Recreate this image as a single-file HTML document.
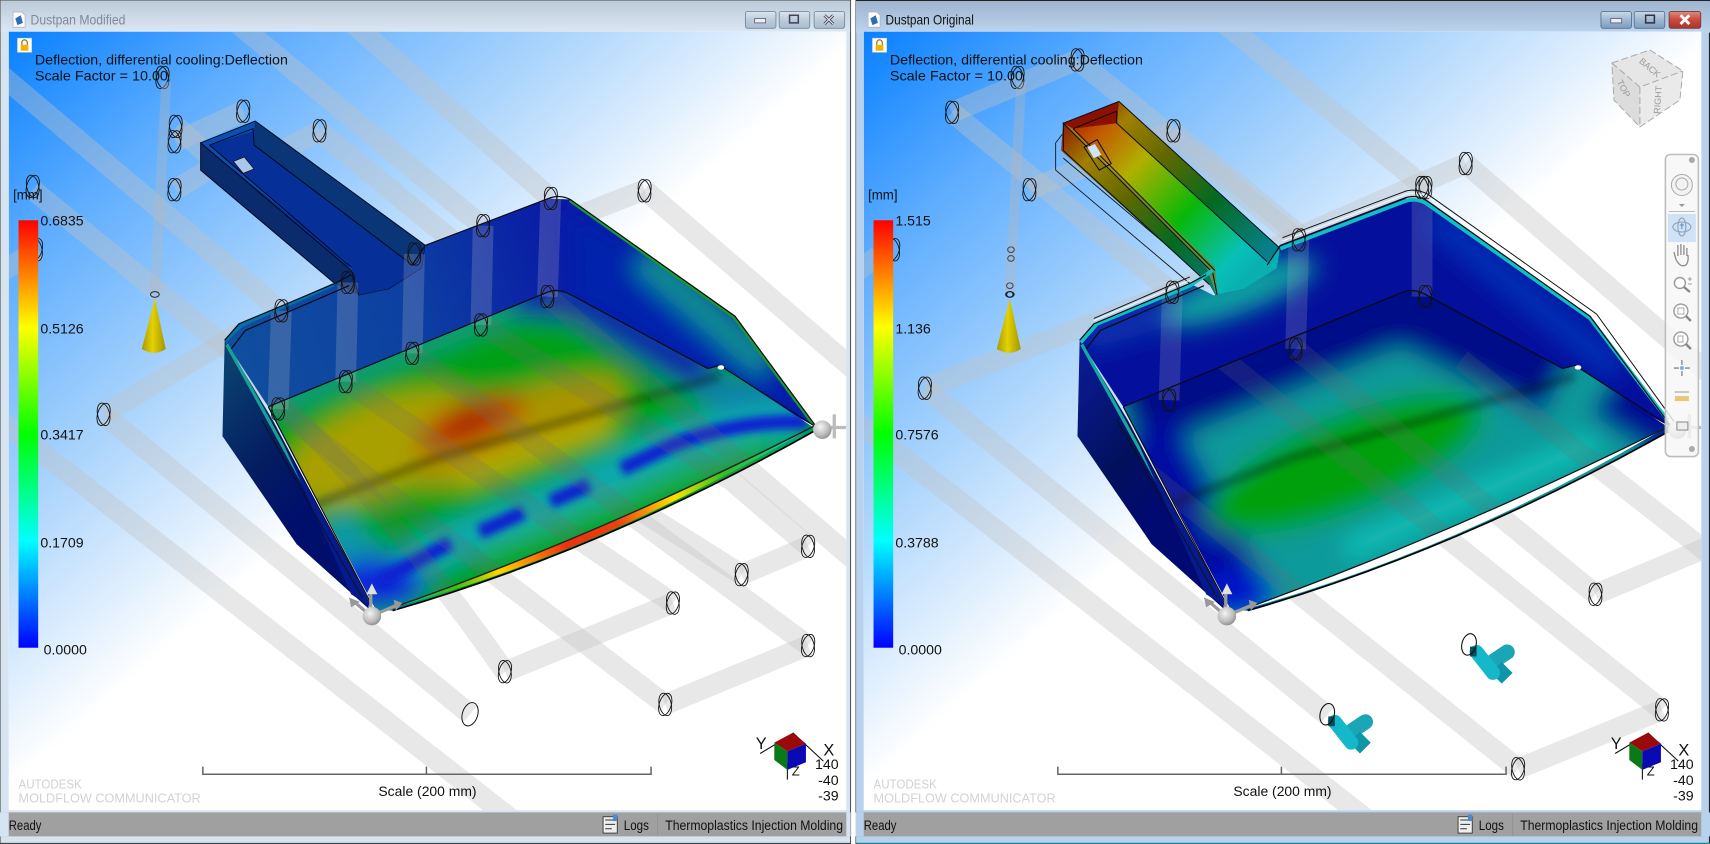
<!DOCTYPE html>
<html><head><meta charset="utf-8"><title>Dustpan</title>
<style>html,body{margin:0;padding:0;background:#fff}svg{display:block}text{font-family:"Liberation Sans",sans-serif;fill:#111}</style>
</head><body>
<svg xmlns="http://www.w3.org/2000/svg" width="1710" height="844" viewBox="0 0 1568 774" preserveAspectRatio="none">
<defs>
<linearGradient id="bgL" gradientUnits="userSpaceOnUse" x1="8" y1="29" x2="352" y2="420"><stop offset="0" stop-color="#0880ff"/><stop offset=".3" stop-color="#5cacff"/><stop offset=".65" stop-color="#acd5fc"/><stop offset=".88" stop-color="#e2f0fe"/><stop offset="1" stop-color="#fff"/></linearGradient>
<linearGradient id="bgR" gradientUnits="userSpaceOnUse" x1="792" y1="29" x2="1136" y2="420"><stop offset="0" stop-color="#0880ff"/><stop offset=".3" stop-color="#5cacff"/><stop offset=".65" stop-color="#acd5fc"/><stop offset=".88" stop-color="#e2f0fe"/><stop offset="1" stop-color="#fff"/></linearGradient>
<linearGradient id="tL" x1="0" y1="0" x2="0" y2="1"><stop offset="0" stop-color="#bccad8"/><stop offset="1" stop-color="#dbe7f3"/></linearGradient>
<linearGradient id="tR" x1="0" y1="0" x2="0" y2="1"><stop offset="0" stop-color="#9fb5cf"/><stop offset="1" stop-color="#bcd4ee"/></linearGradient>
<linearGradient id="btn" x1="0" y1="0" x2="0" y2="1"><stop offset="0" stop-color="#dbe5ef"/><stop offset=".5" stop-color="#bccbdb"/><stop offset="1" stop-color="#a9bccf"/></linearGradient>
<linearGradient id="btnR" x1="0" y1="0" x2="0" y2="1"><stop offset="0" stop-color="#c9d9e9"/><stop offset=".5" stop-color="#9fb7d2"/><stop offset="1" stop-color="#7e9cbd"/></linearGradient>
<linearGradient id="cls" x1="0" y1="0" x2="0" y2="1"><stop offset="0" stop-color="#dc8d7f"/><stop offset=".5" stop-color="#c9493c"/><stop offset="1" stop-color="#a7362c"/></linearGradient>
<linearGradient id="scale" x1="0" y1="0" x2="0" y2="1"><stop offset="0" stop-color="#f00"/><stop offset=".25" stop-color="#ff0"/><stop offset=".5" stop-color="#0f0"/><stop offset=".75" stop-color="#0ff"/><stop offset="1" stop-color="#00f"/></linearGradient>
<linearGradient id="cone" x1="0" y1="0" x2="1" y2="0"><stop offset="0" stop-color="#a89a00"/><stop offset=".45" stop-color="#e4d200"/><stop offset="1" stop-color="#a39500"/></linearGradient>
<linearGradient id="wallL" gradientUnits="userSpaceOnUse" x1="206" y1="300" x2="510" y2="210"><stop offset="0" stop-color="#104e9e"/><stop offset=".55" stop-color="#0c3fa2"/><stop offset="1" stop-color="#0a1aa6"/></linearGradient>
<linearGradient id="outer" gradientUnits="userSpaceOnUse" x1="205" y1="340" x2="310" y2="430"><stop offset="0" stop-color="#0a4070"/><stop offset=".6" stop-color="#041c60"/><stop offset="1" stop-color="#000f6c"/></linearGradient>
<linearGradient id="outerR" gradientUnits="userSpaceOnUse" x1="205" y1="340" x2="310" y2="430"><stop offset="0" stop-color="#0a1a90"/><stop offset=".6" stop-color="#02105c"/><stop offset="1" stop-color="#000a70"/></linearGradient>
<linearGradient id="edge" gradientUnits="userSpaceOnUse" x1="362" y1="556" x2="745" y2="392"><stop offset="0" stop-color="#10b090"/><stop offset=".14" stop-color="#40c010"/><stop offset=".24" stop-color="#ffd400"/><stop offset=".4" stop-color="#f03010"/><stop offset=".52" stop-color="#e84010"/><stop offset=".66" stop-color="#ffe000"/><stop offset=".78" stop-color="#30c020"/><stop offset="1" stop-color="#10c8d0"/></linearGradient>
<linearGradient id="hR" gradientUnits="userSpaceOnUse" x1="190" y1="105" x2="355" y2="260"><stop offset="0" stop-color="#a81000"/><stop offset=".16" stop-color="#c25a00"/><stop offset=".36" stop-color="#b0b000"/><stop offset=".64" stop-color="#08b808"/><stop offset=".9" stop-color="#08c0b8"/><stop offset="1" stop-color="#08b0b0"/></linearGradient>
<linearGradient id="hRd" gradientUnits="userSpaceOnUse" x1="190" y1="105" x2="355" y2="260"><stop offset="0" stop-color="#880c00"/><stop offset=".2" stop-color="#a08000"/><stop offset=".42" stop-color="#606800"/><stop offset=".68" stop-color="#046a20"/><stop offset="1" stop-color="#088090"/></linearGradient>
<radialGradient id="ball" cx=".4" cy=".35" r=".75"><stop offset="0" stop-color="#f4f4f4"/><stop offset=".6" stop-color="#bcbcbc"/><stop offset="1" stop-color="#808080"/></radialGradient>
<filter id="b14" x="-30%" y="-30%" width="160%" height="160%"><feGaussianBlur stdDeviation="11"/></filter>
<filter id="b4" x="-30%" y="-30%" width="160%" height="160%"><feGaussianBlur stdDeviation="3.5"/></filter>
<clipPath id="cL"><rect x="8" y="29" width="768" height="714"/></clipPath>
<clipPath id="cR"><rect x="792" y="29" width="768" height="714"/></clipPath>
<clipPath id="floor"><path d="M246,373 L502,268 Q512,264 523,270 L649,338 L660,335 L749,394 Q554,504 360,560 L345,560 Z"/></clipPath>
<clipPath id="back"><path d="M206,312 L219,297 L307,260 L329,271 L357,265 L387,246 L390,225 L503,182 L523,183 L674,290 L749,392 L649,338 L523,270 L502,268 L246,373 Z"/></clipPath>
<g id="ring" fill="none" stroke="#111" stroke-width=".8"><ellipse rx="5.5" ry="10.5" transform="rotate(17)"/><ellipse rx="5.5" ry="10.5" transform="rotate(-13)"/></g>
<g id="knot" fill="none" stroke-linecap="round"><path d="M8,0 L20,-8" stroke="#1aa6b6" stroke-width="14"/><path d="M10,6 L20,16" stroke="#0e96a8" stroke-width="14" stroke-linecap="butt"/><path d="M-8,-8 L7,11" stroke="#14b8c8" stroke-width="13"/><rect x="-14" y="-13" width="6" height="9" fill="#0a4a58"/><ellipse cx="-15" cy="-15" rx="6.5" ry="10" stroke="#111" stroke-width="1" transform="rotate(14 -15 -15)"/></g>
<g id="legendaxes">
<path d="M697,691 L722,676 M727,672 L755,698 M722,700 L722,715" stroke="#111" stroke-width="1" fill="none"/>
<path d="M710,681 L727,672 L739,682 L722,689Z" fill="#9a0a0a"/><path d="M710,681 L722,689 L722,706 L710,697Z" fill="#0a7a18"/><path d="M722,689 L739,682 L739,699 L722,706Z" fill="#0a0ab4"/>
<text x="693" y="687" font-size="15">Y</text><text x="755" y="693" font-size="15">X</text><text x="726" y="711" font-size="12">Z</text>
<text x="769" y="705" font-size="13" text-anchor="end">140</text><text x="769" y="720" font-size="13" text-anchor="end">-40</text><text x="769" y="734" font-size="13" text-anchor="end">-39</text>
</g>
<g id="common">
<rect x="17" y="202" width="18" height="392" fill="url(#scale)"/>
<path d="M186,703 V710 H597 V703 M391,703 V710" fill="none" stroke="#666" stroke-width="1.4"/>
<text x="347" y="730" font-size="13" textLength="90" lengthAdjust="spacingAndGlyphs">Scale (200 mm)</text>
<text x="17" y="723" font-size="12" style="fill:#d2d2d2" textLength="58" lengthAdjust="spacingAndGlyphs">AUTODESK</text>
<text x="17" y="736" font-size="12" style="fill:#d2d2d2" textLength="167" lengthAdjust="spacingAndGlyphs">MOLDFLOW COMMUNICATOR</text>
<rect x="16" y="35" width="13" height="13" fill="#fff" stroke="#ccc" stroke-width=".5"/><rect x="19" y="41" width="7" height="5.5" fill="#f0b400"/><path d="M20,41 V39 a2.5,2.5 0 0 1 5,0 V41" fill="none" stroke="#8a6a00" stroke-width="1"/>
<text x="32" y="59" font-size="13" textLength="232" lengthAdjust="spacingAndGlyphs">Deflection, differential cooling:Deflection</text>
<text x="32" y="74" font-size="13" textLength="122" lengthAdjust="spacingAndGlyphs">Scale Factor = 10.00</text>
<text x="12" y="183" font-size="13" textLength="27" lengthAdjust="spacingAndGlyphs">[mm]</text>
<path d="M148,75 L137,268 L147,268 L157,75 Z" fill="#b8b8b8" fill-opacity=".35"/>
<path d="M142,274 L152,320 Q142,327 130,320 Z" fill="url(#cone)"/>
<ellipse cx="142" cy="270" rx="4" ry="2.6" fill="none" stroke="#222" stroke-width=".9"/>
</g>
<g id="status">
<rect x="0" y="745" width="780" height="22" fill="#a0a0a0"/>
<text x="8" y="761" font-size="13" textLength="30" lengthAdjust="spacingAndGlyphs">Ready</text>
<rect x="553" y="749" width="13" height="15" fill="#eee" stroke="#333" stroke-width=".8"/><path d="M555,752 H564 M555,756 H564 M555,760 H561" stroke="#333" stroke-width="1"/><rect x="562" y="747" width="4" height="6" fill="#4a8ad0"/>
<text x="572" y="761" font-size="13" textLength="23" lengthAdjust="spacingAndGlyphs">Logs</text>
<path d="M603,746 V766" stroke="#949494"/>
<text x="610" y="761" font-size="13" textLength="163" lengthAdjust="spacingAndGlyphs">Thermoplastics Injection Molding</text>
</g>
<g id="pan-lines" fill="none" stroke="#0a0a14" stroke-width="1.1">
<path d="M206,312 L219,297 L307,260 L322,252 M378,243 L390,225 L503,182 Q513,178 523,183 L674,290 L749,392"/>
<path d="M246,373 L502,268 Q512,264 523,270 L649,338 L660,335 L749,392"/>
<path d="M246,373 L340,553"/>
<path d="M212,320 L225,303 L320,262"/>
</g>
</defs>

<!-- frames -->
<rect width="1568" height="774" fill="#fff"/>
<rect x="0" y="0" width="780" height="774" fill="#d6e3f0" stroke="#444" stroke-width="1"/>
<rect x=".5" y=".5" width="779" height="29" fill="url(#tL)"/>
<rect x="784.5" y=".5" width="783" height="773" fill="#b8d1ec" stroke="#222"/>
<rect x="785" y="1" width="783" height="29" fill="url(#tR)"/>

<!-- title left -->
<path d="M12,11 H20 L23,14 V25 H12Z" fill="#fff" stroke="#aab" stroke-width=".6"/><path d="M14,17 L19,14 L21,21 L16,23Z" fill="#2c6fb8"/>
<text x="28" y="22.5" font-size="12.5" style="fill:#7d8b99" textLength="87" lengthAdjust="spacingAndGlyphs">Dustpan Modified</text>
<g stroke="#76889a" stroke-width=".8"><rect x="683.5" y="10.5" width="28" height="15.5" rx="2" fill="url(#btn)"/><rect x="714.5" y="10.5" width="28" height="15.5" rx="2" fill="url(#btn)"/><rect x="746.5" y="10.5" width="28" height="15.5" rx="2" fill="url(#btn)"/></g>
<rect x="692" y="17" width="10" height="4" fill="#e8eef4" stroke="#556" stroke-width=".7"/><rect x="724" y="14" width="8" height="7" fill="none" stroke="#445" stroke-width="1.4"/>
<path d="M756,14 L764,22 M764,14 L756,22" stroke="#445" stroke-width="2.6"/><path d="M756,14 L764,22 M764,14 L756,22" stroke="#eef" stroke-width="1"/>

<!-- title right -->
<path d="M796,11 H804 L807,14 V25 H796Z" fill="#fff" stroke="#aab" stroke-width=".6"/><path d="M798,17 L803,14 L805,21 L800,23Z" fill="#2c6fb8"/>
<text x="812" y="22.5" font-size="12.5" textLength="81" lengthAdjust="spacingAndGlyphs">Dustpan Original</text>
<g stroke="#54708f" stroke-width=".8"><rect x="1468" y="10.5" width="28" height="15.5" rx="2" fill="url(#btnR)"/><rect x="1498.5" y="10.5" width="28" height="15.5" rx="2" fill="url(#btnR)"/></g>
<rect x="1530.5" y="10.5" width="29" height="15.5" rx="2" fill="url(#cls)" stroke="#7a3a34" stroke-width=".8"/>
<rect x="1477" y="17" width="10" height="4" fill="#e8eef4" stroke="#556" stroke-width=".7"/><rect x="1509" y="14" width="8" height="7" fill="none" stroke="#334" stroke-width="1.4"/>
<path d="M1541,14 L1549,22 M1549,14 L1541,22" stroke="#fff" stroke-width="2.6"/>

<!-- LEFT CLIENT -->
<rect x="8" y="29" width="768" height="714" fill="#fff"/>
<g clip-path="url(#cL)">
<rect x="8" y="29" width="768" height="714" fill="url(#bgL)"/>
<g fill="none" stroke="#c2c2c2" stroke-opacity=".38" stroke-width="19">
<path d="M95,380 L431,655"/><path d="M0,385 L470,752"/>
<path d="M0,68 L256,284"/><path d="M30,174 L211,321"/><path d="M162,116 L319,259"/>
<path d="M216,20 L443,208"/><path d="M322,20 L505,182"/><path d="M293,120 L420,225"/>
<path d="M591,174 L790,345"/><path d="M505,208 L591,174"/>
<path d="M95,380 L220,305"/><path d="M161,174 L200,150"/><path d="M161,130 L223,102"/><path d="M235,150 L293,120"/><path d="M0,250 L35,229"/>
<path d="M215,330 Q340,440 463,616"/><path d="M255,375 L610,646"/><path d="M317,350 L617,553"/><path d="M378,324 L741,592"/><path d="M400,350 L680,527"/><path d="M441,298 L670,440 L741,501"/><path d="M502,272 L785,515"/>
<path d="M463,616 L617,553"/><path d="M610,646 L741,592"/><path d="M680,527 L741,501"/>
</g>
<use href="#ring" x="223" y="102"/><use href="#ring" x="161" y="116"/><use href="#ring" x="160" y="130"/><use href="#ring" x="160" y="174"/><use href="#ring" x="293" y="120"/><use href="#ring" x="149" y="71"/><use href="#ring" x="30" y="171"/><use href="#ring" x="33" y="229"/><use href="#ring" x="95" y="380"/><use href="#ring" x="591" y="175"/><use href="#ring" x="463" y="616"/><use href="#ring" x="610" y="646"/><use href="#ring" x="617" y="553"/><use href="#ring" x="741" y="592"/><use href="#ring" x="680" y="527"/><use href="#ring" x="741" y="501"/>
<ellipse cx="431" cy="655" rx="7" ry="11" fill="none" stroke="#111" stroke-width=".9" transform="rotate(18 431 655)"/>
<use href="#common"/>
<path d="M765,380 V402 M745,392 H776" stroke="#bbb" stroke-width="3"/>

<!-- handle -->
<path d="M184,131 L234,111 L390,225 L387,246 L357,265 L329,271 L307,260 L184,156Z" fill="#062f98"/>
<path d="M184,131 L184,156 L307,260 L329,271 L322,248 Z" fill="#0b2c6c"/>
<path d="M234,111 L390,225 L378,243 L233,133Z" fill="#0a3576"/>
<path d="M184,131 L234,111 L233,120 L192,133 L322,245 L329,271 L318,240Z" fill="#0c4fb0"/>
<g fill="none" stroke="#05081c" stroke-width=".9"><path d="M184,131 L234,111 L390,225 L387,246 L357,265 L329,271 L322,248 L184,131 V156 L307,260"/><path d="M192,133 L232,118 L233,133 L378,243"/><path d="M192,133 L322,245"/></g>
<path d="M214,148 L224,144 L233,155 L223,159Z" fill="#a9c7ec" stroke="#111" stroke-width=".7"/>

<!-- walls -->
<path d="M206,312 L204,400 L272,499 L340,560 L250,385 Z" fill="url(#outer)"/>
<path d="M206,312 L219,297 L307,260 L329,271 L357,265 L387,246 L390,225 L503,182 L523,183 L674,290 L749,392 L649,338 L523,270 L502,268 L246,373 Z" fill="url(#wallL)"/>
<g clip-path="url(#back)"><g filter="url(#b14)"><path d="M523,190 L525,275 L650,345 L745,390 L670,290Z" fill="#0420ac"/><path d="M590,235 L705,335" stroke="#0a9090" stroke-width="30" fill="none"/></g><path d="M523,183 L674,290 L749,392" stroke="#1a9a30" stroke-width="5" fill="none"/></g>

<!-- floor left -->
<g clip-path="url(#floor)"><g filter="url(#b14)">
<rect x="230" y="250" width="540" height="330" fill="#06a014"/>
<path d="M246,373 L500,268" stroke="#0a9a80" stroke-width="22" fill="none"/>
<path d="M470,270 L530,275 L650,345" stroke="#0824a8" stroke-width="38" fill="none"/>
<ellipse cx="350" cy="410" rx="95" ry="42" transform="rotate(-22 350 410)" fill="#a8a000"/>
<ellipse cx="470" cy="395" rx="110" ry="32" transform="rotate(-22 470 395)" fill="#a89400"/>
<ellipse cx="432" cy="388" rx="52" ry="20" transform="rotate(-22 432 388)" fill="#c04000"/>
<ellipse cx="428" cy="386" rx="26" ry="12" transform="rotate(-22 428 386)" fill="#a81c00"/>
<path d="M420,440 L560,388" stroke="#c8b000" stroke-width="14" fill="none"/>
<ellipse cx="690" cy="365" rx="55" ry="18" transform="rotate(10 690 365)" fill="#0a7ea8"/>
<path d="M350,535 L413,498 L459,480 L521,455 L570,430 L619,407 Q680,385 735,385" stroke="#10a8b0" stroke-width="36" fill="none"/>
<path d="M300,480 L350,535" stroke="#0a98a8" stroke-width="42" fill="none"/>
<ellipse cx="345" cy="535" rx="44" ry="24" fill="#0a20d8"/>
<path d="M440,510 L700,405" stroke="#22b060" stroke-width="14" fill="none"/>
</g>
<g filter="url(#b4)"><path d="M270,470 L400,420 L660,345" stroke="#000" stroke-opacity=".3" stroke-width="8" fill="none"/>
<path d="M350,532 L413,498 M440,488 L480,470 M505,460 L540,445 M570,430 L619,407 Q680,385 740,387" stroke="#0820d0" stroke-width="13" fill="none"/>
</g>
<g fill="none" stroke="#707070" stroke-opacity=".2" stroke-width="19"><path d="M255,375 L610,646"/><path d="M215,330 Q340,440 463,616"/><path d="M317,350 L617,553"/><path d="M378,324 L741,592"/><path d="M441,298 L670,440 L741,501"/><path d="M502,272 L785,515"/></g>
</g>
<g fill="none" stroke="#c8c8c8" stroke-opacity=".22" stroke-width="19"><path d="M258,285 L255,375"/><path d="M319,259 L317,350"/><path d="M380,233 L378,324"/><path d="M443,207 L441,298"/><path d="M505,182 L502,272"/></g>

<!-- edges -->
<path d="M362,557 Q552,490 746,391 Q554,504 362,557Z" fill="url(#edge)"/>
<path d="M358,558 Q552,490 748,390" stroke="#222" stroke-width="1.3" fill="none"/><path d="M360,560 Q554,504 749,394" stroke="#000" stroke-width="1.5" fill="none"/>
<path d="M208,316 L250,392 L335,548" stroke="#18a098" stroke-width="3" fill="none"/>
<path d="M207,312 L222,298 L306,261" stroke="#0a70a8" stroke-width="3" fill="none"/>
<path d="M250,385 L342,558 L322,545Z" fill="#061a90"/>
<use href="#pan-lines"/>
<path d="M340,553 L250,388 M332,548 L240,385" stroke="#111" stroke-width=".8" fill="none"/>
<ellipse cx="661" cy="337" rx="3" ry="2" fill="#fff"/>
<use href="#ring" x="258" y="285"/><use href="#ring" x="319" y="259"/><use href="#ring" x="380" y="233"/><use href="#ring" x="443" y="207"/><use href="#ring" x="505" y="182"/><use href="#ring" x="255" y="375"/><use href="#ring" x="317" y="350"/><use href="#ring" x="378" y="324"/><use href="#ring" x="441" y="298"/><use href="#ring" x="502" y="272"/>
<!-- markers -->
<path d="M340,565 V545 M340,565 L325,552 M340,565 L364,555" stroke="#9c9c9c" stroke-width="3" fill="none"/><path d="M336,545 L341,535 L346,545Z" fill="#e0e0e0"/><path d="M320,548 L330,552 L322,557Z" fill="#999"/><path d="M361,550 L369,553 L363,560Z" fill="#999"/>
<circle cx="341" cy="565" r="8.5" fill="url(#ball)"/><circle cx="754" cy="394" r="8.5" fill="url(#ball)"/>
<use href="#legendaxes"/>
</g>
<text x="37" y="207" font-size="13">0.6835</text><text x="37" y="306" font-size="13">0.5126</text><text x="37" y="403" font-size="13">0.3417</text><text x="37" y="502" font-size="13">0.1709</text><text x="40" y="600" font-size="13">0.0000</text>
<use href="#status"/>

<!-- RIGHT CLIENT -->
<rect x="792" y="29" width="768" height="714" fill="#fff"/>
<g clip-path="url(#cR)">
<rect x="792" y="29" width="768" height="714" fill="url(#bgR)"/>
<g fill="none" stroke="#c2c2c2" stroke-opacity=".38" stroke-width="19">
<path d="M784,385 L1254,752"/><path d="M848,356 L1217,656"/>
<path d="M873,103 L1075,268"/><path d="M988,55 L1191,220"/><path d="M1076,120 L1191,215"/><path d="M1121,20 L1307,172"/><path d="M1344,150 L1570,345"/>
<path d="M873,103 L988,55"/><path d="M944,174 L1076,120"/><path d="M848,356 L1075,268"/><path d="M1075,268 L1344,150"/><path d="M784,250 L805,235"/>
<path d="M1020,408 L1392,705"/><path d="M1110,320 L1524,651"/><path d="M1188,320 L1463,545"/><path d="M1340,330 L1570,510"/>
<path d="M1392,705 L1524,651"/><path d="M1463,545 L1570,500"/>
</g>
<ellipse cx="927" cy="229" rx="3" ry="2.6" fill="none" stroke="#111"/><ellipse cx="927" cy="237" rx="3" ry="2.6" fill="none" stroke="#111"/><ellipse cx="926" cy="262" rx="3" ry="2.6" fill="none" stroke="#111"/><ellipse cx="926" cy="270" rx="3" ry="2.6" fill="none" stroke="#111"/>
<use href="#ring" x="873" y="103"/><use href="#ring" x="988" y="55"/><use href="#ring" x="933" y="71"/><use href="#ring" x="1076" y="120"/><use href="#ring" x="944" y="174"/><use href="#ring" x="1344" y="150"/><use href="#ring" x="1307" y="172"/><use href="#ring" x="848" y="356"/><use href="#ring" x="819" y="229"/><use href="#ring" x="1463" y="545"/><use href="#ring" x="1524" y="651"/><use href="#ring" x="1392" y="705"/>
<g transform="translate(784 0)"><use href="#common"/></g>
<path d="M1549,380 V402 M1530,392 H1560" stroke="#bbb" stroke-width="3"/>
<use href="#knot" x="1362" y="606"/><use href="#knot" x="1232" y="670"/>

<g transform="translate(784 0)">
<!-- ghost -->
<path d="M184,131 V156 L307,260 M184,131 L191,122 M191,145 L318,252" fill="none" stroke="#111" stroke-width=".8"/>
<!-- handle right -->
<path d="M191,113 L242,93 L390,228 L390,251 L360,271 L333,275 L325,261 L189,138Z" fill="url(#hR)"/>
<path d="M191,113 L189,138 L325,261 L333,275 L330,245 Z" fill="url(#hRd)"/>
<path d="M242,93 L390,228 L378,240 L240,113Z" fill="url(#hRd)"/>
<path d="M191,113 L242,93 L240,102 L200,118 L330,245 L333,275 L322,245Z" fill="#a8a020" fill-opacity=".55"/>
<path d="M191,113 L242,93 L240,113 L200,118Z" fill="#8a1000"/>
<g fill="none" stroke="#05081c" stroke-width=".9"><path d="M191,113 L242,93 L390,228 L390,251 L360,271 L333,275 L328,250 L191,113 V138 L325,261"/><path d="M200,118 L240,102 L240,113 L378,240"/><path d="M200,118 L330,248"/><path d="M210,135 L222,128 L235,150 L224,156Z"/></g>
<path d="M213,135 L220,132 L226,142 L219,145Z" fill="#cfe2f7"/>

<path d="M206,312 L204,400 L272,499 L340,560 L250,385 Z" fill="url(#outerR)"/>
<path d="M206,312 L219,297 L307,260 L329,271 L357,265 L387,246 L390,225 L503,182 L523,183 L674,290 L749,392 L649,338 L523,270 L502,268 L246,373 Z" fill="#04109c"/>
<g clip-path="url(#back)"><g filter="url(#b14)"><ellipse cx="350" cy="268" rx="78" ry="20" transform="rotate(-20 350 268)" fill="#08a0a0"/><path d="M210,310 L290,285" stroke="#0838b0" stroke-width="24" fill="none"/><path d="M530,200 L700,340" stroke="#0632b8" stroke-width="24" fill="none"/></g></g>

<g clip-path="url(#floor)"><g filter="url(#b14)">
<rect x="230" y="250" width="540" height="330" fill="#0a9a9a"/>
<path d="M246,375 L502,270 L650,342" stroke="#000a88" stroke-width="88" fill="none"/>
<path d="M255,400 L345,560" stroke="#040fa0" stroke-width="84" fill="none"/>
<path d="M690,355 L760,400" stroke="#000c90" stroke-width="58" fill="none"/>
<ellipse cx="450" cy="425" rx="135" ry="44" transform="rotate(-22 450 425)" fill="#06a008"/>
<path d="M450,505 L680,405" stroke="#14ccc0" stroke-width="14" fill="none"/>
<ellipse cx="350" cy="545" rx="34" ry="22" fill="#0418c8"/>
</g>
<g filter="url(#b4)"><path d="M270,470 L400,420 L660,345" stroke="#000" stroke-opacity=".3" stroke-width="8" fill="none"/></g>
<g fill="none" stroke="#707070" stroke-opacity=".18" stroke-width="19"><path d="M176,360 L608,705"/><path d="M326,320 L740,651"/><path d="M404,320 L679,545"/><path d="M556,330 L786,510"/></g>
</g>
<g fill="none" stroke="#c8c8c8" stroke-opacity=".18" stroke-width="19"><path d="M291,268 L288,367"/><path d="M407,220 L404,320"/><path d="M520,172 L520,272"/></g>

<!-- rim lines -->
<path d="M207,314 L222,297 L307,262 L328,248 M390,228 L503,185 Q513,181 523,186 L674,292 L745,385" fill="none" stroke="#10c0c0" stroke-width="3.4"/>
<path d="M208,316 L250,392 L335,548" stroke="#14a8a0" stroke-width="3" fill="none"/>
<path d="M250,385 L342,558 L322,545Z" fill="#061a90"/>
<path d="M219,292 L307,254 M392,218 L503,176 Q513,172 525,178 L680,288 L755,392" fill="none" stroke="#111" stroke-width=".9"/>
<path d="M219,294 L307,257 M392,221 L503,179 Q513,175 525,180 L678,290" fill="none" stroke="#fff" stroke-width="1.2" stroke-opacity=".7"/>
<use href="#pan-lines"/>
<path d="M340,553 L250,388 M332,548 L240,385" stroke="#111" stroke-width=".8" fill="none"/>
<path d="M360,558 Q552,488 747,390 Q554,504 360,558Z" fill="#fff"/>
<path d="M358,558 Q552,488 748,390" stroke="#111" stroke-width="1.1" fill="none"/>
<path d="M360,560 Q554,504 749,394" stroke="#000" stroke-width="1.5" fill="none"/>
<ellipse cx="663" cy="337" rx="3" ry="2" fill="#fff"/>
<use href="#ring" x="407" y="220"/><use href="#ring" x="291" y="268"/><use href="#ring" x="523" y="272"/><use href="#ring" x="404" y="320"/><use href="#ring" x="288" y="367"/><use href="#ring" x="520" y="172"/>
<path d="M340,565 V545 M340,565 L325,552 M340,565 L364,555" stroke="#9c9c9c" stroke-width="3" fill="none"/><path d="M336,545 L341,535 L346,545Z" fill="#e0e0e0"/><path d="M320,548 L330,552 L322,557Z" fill="#999"/><path d="M361,550 L369,553 L363,560Z" fill="#999"/>
<circle cx="341" cy="565" r="8.5" fill="url(#ball)"/><circle cx="754" cy="394" r="8.5" fill="url(#ball)"/>
<use href="#legendaxes"/>
</g>

<!-- nav cube + toolbar, real px coords -->
<g transform="scale(.9169 .9171)">
<g><path d="M1612,63 L1650,50 L1683,71 L1640,87Z" fill="#e6e6e6"/><path d="M1612,63 L1640,87 L1640,127 L1614,100Z" fill="#dcdcdc"/><path d="M1640,87 L1683,71 L1680,100 L1640,127Z" fill="#eaeaea"/></g>
<path d="M1612,63 L1650,50 L1683,71 L1680,100 L1640,127 L1614,100Z M1612,63 L1640,87 L1683,71 M1640,87 V127" fill="none" stroke="#aaa" stroke-width="1" stroke-dasharray="7 3"/>
<text transform="translate(1648 70) rotate(40)" font-size="9" text-anchor="middle" style="fill:#999">BACK</text>
<text transform="translate(1621 90) rotate(62)" font-size="9" text-anchor="middle" style="fill:#999">TOP</text>
<text transform="translate(1661 100) rotate(-86)" font-size="9" text-anchor="middle" style="fill:#999">RIGHT</text>

<rect x="1665.5" y="154.5" width="33" height="302" rx="5" fill="#f6f6f6" fill-opacity=".82" stroke="#bdbdbd" stroke-width="1.6"/>
<circle cx="1692" cy="160" r="3" fill="#aaa"/>
<rect x="1669" y="211" width="26" height="1" fill="#bbb"/>
<rect x="1668" y="214" width="28" height="28" fill="#d0e2f5"/>
<circle cx="1682" cy="185" r="10.5" fill="#f2f2f2" stroke="#aaa"/><circle cx="1682" cy="184" r="6" fill="none" stroke="#aaa"/>
<path d="M1679,204 H1685 L1682,207Z" fill="#999"/>
<g fill="none" stroke="#8aa0b4" stroke-width="1.1"><ellipse cx="1682" cy="227" rx="9" ry="5"/><ellipse cx="1682" cy="227" rx="4" ry="9"/></g>
<path d="M1680,225 H1684 M1682,223 V229" stroke="#5a8ab8"/>
<path d="M1676,259 L1674,252 M1678,256 V245 M1681,255 V244 M1684,255 V245 M1687,256 V248 M1676,259 Q1680,268 1686,265 Q1689,262 1688,255" fill="none" stroke="#8c8c8c" stroke-width="1.3"/>
<g fill="none" stroke="#9a9a9a" stroke-width="1.4"><circle cx="1680" cy="283" r="5.5" fill="#fff"/><circle cx="1681" cy="311" r="7" fill="#fff"/><circle cx="1681" cy="339" r="7" fill="#fff"/></g>
<path d="M1684,287 L1690,292 M1686,316 L1691,321 M1686,344 L1691,349" stroke="#888" stroke-width="2.4"/>
<path d="M1688,279 H1692 M1690,277 V281 M1688,284 H1692" stroke="#888" stroke-width=".8"/>
<rect x="1678" y="308" width="6" height="6" fill="none" stroke="#aaa"/><path d="M1678,336 H1683 V342 H1678Z" fill="none" stroke="#aaa"/>
<path d="M1682,360 V365 M1682,371 V376 M1674,368 H1679 M1685,368 H1690" stroke="#999" stroke-width="1.6"/><circle cx="1682" cy="368" r="2" fill="#7fb0e0"/>
<rect x="1675" y="396" width="14" height="5" fill="#e8c878"/><path d="M1675,392 H1689" stroke="#999"/>
<rect x="1677" y="422" width="11" height="8" fill="#eee" stroke="#888"/>
<circle cx="1692" cy="449" r="3" fill="#aaa"/>
</g>
</g>
<g transform="translate(784 0)">
<text x="37" y="207" font-size="13">1.515</text><text x="37" y="306" font-size="13">1.136</text><text x="37" y="403" font-size="13">0.7576</text><text x="37" y="502" font-size="13">0.3788</text><text x="40" y="600" font-size="13">0.0000</text>
</g>
<g transform="translate(784 0)"><use href="#status"/></g>
<rect x="784" y="745" width="8" height="22" fill="#b8d1ec"/><rect x="1560" y="745" width="8" height="22" fill="#b8d1ec"/>
<rect x="0" y="745" width="8" height="22" fill="#d6e3f0"/><rect x="776" y="745" width="4" height="22" fill="#d6e3f0"/>
<rect x="780.5" y="0" width="4" height="774" fill="#fff"/>
<path d="M0,773.5 H780" stroke="#444"/><path d="M785,773.5 H1568" stroke="#128a92"/>
</svg>
</body></html>
